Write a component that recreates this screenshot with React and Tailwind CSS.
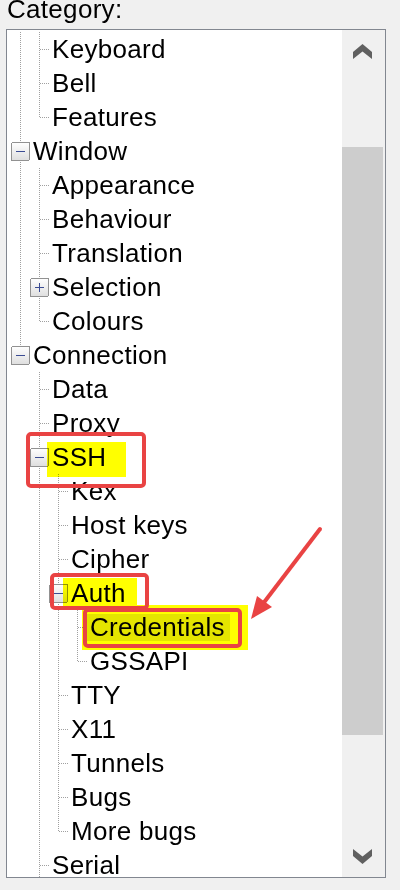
import React from 'react';

// tree rows: cols = connector type per indent column, box = expander
const ROWS = [
  { label: 'Keyboard', cols: ['pipe', 'tee'] },
  { label: 'Bell', cols: ['pipe', 'tee'] },
  { label: 'Features', cols: ['pipe', 'elbow'] },
  { label: 'Window', cols: ['tee'], box: 'minus' },
  { label: 'Appearance', cols: ['pipe', 'tee'] },
  { label: 'Behaviour', cols: ['pipe', 'tee'] },
  { label: 'Translation', cols: ['pipe', 'tee'] },
  { label: 'Selection', cols: ['pipe', 'tee'], box: 'plus' },
  { label: 'Colours', cols: ['pipe', 'elbow'] },
  { label: 'Connection', cols: ['elbow'], box: 'minus' },
  { label: 'Data', cols: ['blank', 'tee'] },
  { label: 'Proxy', cols: ['blank', 'tee'] },
  { label: 'SSH', cols: ['blank', 'tee'], box: 'minus' },
  { label: 'Kex', cols: ['blank', 'pipe', 'tee'] },
  { label: 'Host keys', cols: ['blank', 'pipe', 'tee'] },
  { label: 'Cipher', cols: ['blank', 'pipe', 'tee'] },
  { label: 'Auth', cols: ['blank', 'pipe', 'tee'], box: 'minus' },
  { label: 'Credentials', cols: ['blank', 'pipe', 'pipe', 'tee'], selected: true },
  { label: 'GSSAPI', cols: ['blank', 'pipe', 'pipe', 'elbow'] },
  { label: 'TTY', cols: ['blank', 'pipe', 'tee'] },
  { label: 'X11', cols: ['blank', 'pipe', 'tee'] },
  { label: 'Tunnels', cols: ['blank', 'pipe', 'tee'] },
  { label: 'Bugs', cols: ['blank', 'pipe', 'tee'] },
  { label: 'More bugs', cols: ['blank', 'pipe', 'elbow'] },
  { label: 'Serial', cols: ['blank', 'tee'] },
];

const DOT = { stroke: '#a0a0a0', strokeWidth: 1, strokeDasharray: '1 1' };

const Cell = ({ type, box }) => (
  <svg width="19" height="34" className="block shrink-0" shapeRendering="crispEdges">
    {(type === 'pipe' || type === 'tee') && <line x1="9.5" y1="0" x2="9.5" y2="34" {...DOT} />}
    {type === 'elbow' && <line x1="9.5" y1="0" x2="9.5" y2="17" {...DOT} />}
    {(type === 'tee' || type === 'elbow') && <line x1="10" y1="17.5" x2="19" y2="17.5" {...DOT} />}
    {box && (
      <g>
        <rect x="0.5" y="8.5" width="18" height="18" rx="1.5" fill="url(#expander)" stroke="#919191" />
        <line x1="5" y1="17.5" x2="14" y2="17.5" stroke="#3b4c93" />
        {box === 'plus' && <line x1="9.5" y1="13" x2="9.5" y2="22" stroke="#3b4c93" />}
      </g>
    )}
  </svg>
);

const Chevron = ({ down }) => (
  <svg width="19" height="15" viewBox="0 0 19 15" className={down ? 'rotate-180' : ''}>
    <polygon points="0,8 9.5,0 19,8 19,15 9.5,7.5 0,15" fill="#606060" />
  </svg>
);

export default function App() {
  return (
    <div className="relative h-[890px] w-[400px] overflow-hidden bg-[#f0f0f0] font-['Liberation_Sans',Arial,sans-serif] text-[26px] tracking-[0.3px] text-black">
      <svg width="0" height="0" className="absolute">
        <defs>
          <linearGradient id="expander" x1="0" y1="0" x2="0" y2="1">
            <stop offset="0" stopColor="#ffffff" />
            <stop offset="1" stopColor="#dedede" />
          </linearGradient>
        </defs>
      </svg>

      <div className="-mt-[4px] ml-[7px] leading-[26px]">Category:</div>

      <div className="ml-[6px] mt-[7px] flex h-[849px] w-[380px] overflow-hidden border border-[#828790] bg-white">
        <div className="relative z-0 flex-1 overflow-hidden pl-[4px] pt-[2px]">
          {ROWS.map((row) => (
            <div key={row.label} className="flex h-[34px] items-center">
              {row.cols.map((c, i) => (
                <Cell key={i} type={c} box={i === row.cols.length - 1 ? row.box : null} />
              ))}
              <span className="relative ml-[3px] whitespace-nowrap leading-[34px]">
                {row.selected && (
                  <span className="absolute -left-[3px] -right-[5px] top-[4px] bottom-[3px] -z-10 bg-[#e4e4e4]" />
                )}
                {row.label}
              </span>
            </div>
          ))}
        </div>

        <div className="flex w-[43px] flex-col bg-[#f0f0f0]">
          <div className="flex h-[42px] items-center justify-center pr-[2px]">
            <Chevron />
          </div>
          <div className="h-[75px]" />
          <div className="h-[588px] w-[41px] bg-[#cdcdcd]" />
          <div className="flex-1" />
          <div className="flex h-[42px] items-center justify-center pr-[2px]">
            <Chevron down />
          </div>
        </div>
      </div>

      {/* annotation overlay: highlighter marks, red frames, arrow */}
      <div className="pointer-events-none absolute left-[47px] top-[442px] h-[35px] w-[79px] bg-[#ffff00] mix-blend-multiply" />
      <div className="pointer-events-none absolute left-[63px] top-[578px] h-[29px] w-[74px] bg-[#ffff00] mix-blend-multiply" />
      <div className="pointer-events-none absolute left-[82px] top-[605px] h-[45px] w-[166px] bg-[#ffff00] mix-blend-multiply" />

      <div className="pointer-events-none absolute left-[26px] top-[432px] h-[56px] w-[120px] rounded-[5px] border-4 border-[#e94343]" />
      <div className="pointer-events-none absolute left-[50px] top-[573px] h-[37px] w-[99px] rounded-[5px] border-4 border-[#e94343]" />
      <div className="pointer-events-none absolute left-[83px] top-[608px] h-[40px] w-[159px] rounded-[5px] border-4 border-[#e94343]" />

      <svg className="pointer-events-none absolute left-0 top-0" width="400" height="890">
        <line x1="320" y1="529" x2="262" y2="605" stroke="#e94343" strokeWidth="4" strokeLinecap="round" />
        <polygon points="251,619 257,596 272,607" fill="#e94343" />
      </svg>
    </div>
  );
}
